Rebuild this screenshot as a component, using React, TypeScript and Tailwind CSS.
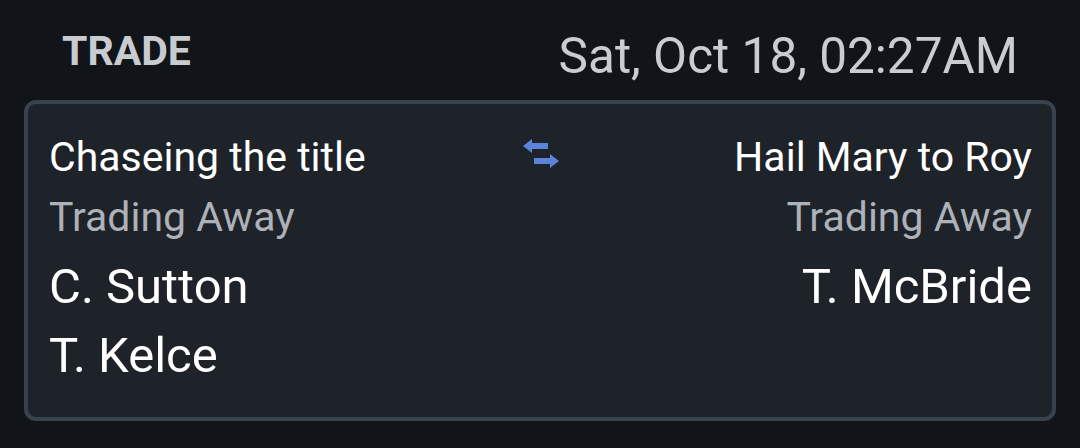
import React from "react";

function SwapIcon() {
  return (
    <svg width="40" height="36" viewBox="0 0 40 36" fill="#5b84d9">
      <path d="M2 9L11 2V6H27V12H11V16Z" />
      <path d="M38 24L29 17V21H13V27H29V31Z" />
    </svg>
  );
}

export default function App() {
  return (
    <div
      className="w-[1080px] h-[448px] bg-[#111418] px-[24px] pt-[31px]"
      style={{ fontFamily: "Roboto, 'Noto Sans', sans-serif" }}
    >
      <div className="flex items-start justify-between pl-[38px] pr-[38px] h-[50px]">
        <span className="text-[41px] font-bold text-[#c8cbd0] leading-[41px]">TRADE</span>
        <span className="text-[49.5px] text-[#c9ccd1] leading-[50px]">Sat, Oct 18, 02:27AM</span>
      </div>
      <div className="mt-[19px] h-[321px] rounded-[12px] border-4 border-[#38424c] bg-[#1e2229] pl-[21px] pr-[20px] pt-[29px]">
        <div className="grid grid-cols-[1fr_auto_1fr]">
          <div className="flex flex-col items-start">
            <div className="text-[41px] text-white leading-[48px]">Chaseing the title</div>
            <div className="text-[41px] text-[#adb1b8] leading-[72px]">Trading Away</div>
            <div className="text-[49px] text-white leading-[68px]">C. Sutton</div>
            <div className="text-[49px] text-white leading-[69px]">T. Kelce</div>
          </div>
          <div className="pt-[4px]">
            <SwapIcon />
          </div>
          <div className="flex flex-col items-end">
            <div className="text-[41px] text-white leading-[48px]">Hail Mary to Roy</div>
            <div className="text-[41px] text-[#adb1b8] leading-[72px]">Trading Away</div>
            <div className="text-[49px] text-white leading-[68px]">T. McBride</div>
          </div>
        </div>
      </div>
    </div>
  );
}
